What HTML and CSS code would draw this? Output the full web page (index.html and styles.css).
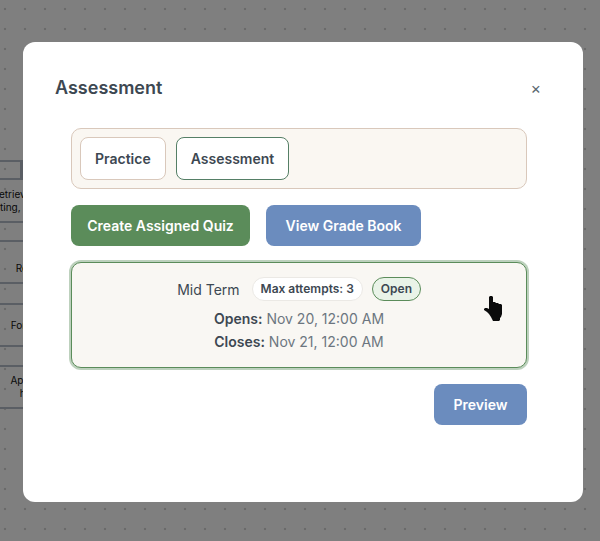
FILE: index.html
```html
<!DOCTYPE html>
<html lang="en">
<head>
<meta charset="utf-8">
<title>Assessment</title>
<link rel="stylesheet" href="styles.css">
</head>
<body>
<div class="canvas">
  <div class="node node-a"></div>
  <div class="node node-a2"></div>
  <div class="node node-b"><span>Retrieve data and</span><span>ting, and more</span></div>
  <div class="node node-c"><span>Fix</span><span>Recall</span></div>
  <div class="node node-d"><span>Formats</span></div>
  <div class="node node-e"><span>Apply to</span><span>help</span></div>
</div>
<div class="overlay">
  <section class="modal">
    <header class="modal-head">
      <h2 class="title">Assessment</h2>
      <span class="close">×</span>
    </header>
    <div class="body">
      <div class="tabs">
        <button class="tab">Practice</button>
        <button class="tab tab-active">Assessment</button>
      </div>
      <div class="actions">
        <button class="btn btn-green">Create Assigned Quiz</button>
        <button class="btn btn-blue btn-grades">View Grade Book</button>
      </div>
      <div class="card">
        <div class="card-row">
          <span class="quiz-name">Mid Term</span>
          <span class="pill">Max attempts: 3</span>
          <span class="pill pill-open">Open</span>
        </div>
        <div class="date date-first"><b>Opens:</b> Nov 20, 12:00 AM</div>
        <div class="date"><b>Closes:</b> Nov 21, 12:00 AM</div>
      </div>
      <div class="foot">
        <button class="btn btn-blue btn-preview">Preview</button>
      </div>
    </div>
    <svg class="cursor" width="18" height="25" viewBox="0 0 18 25"><path d="M5 1l1-1h2l1 1v5h2l1 1h2l1 1h2l1 1v9l-1 3-1 1v2l-1 1H9l-1-2-1-2-2-3-2-2-3-2v-1l1-1h2l2 1z" fill="#0b0b0b"/></svg>
  </section>
</div>
</body>
</html>
```
FILE: styles.css
```css
* { box-sizing: border-box; }
html, body { margin: 0; height: 100%; }
body {
  width: 600px;
  height: 541px;
  overflow: hidden;
  position: relative;
  font-family: Inter, "Liberation Sans", sans-serif;
  background-color: #fff;
}
.canvas {
  position: absolute;
  inset: 0;
  background-image: radial-gradient(circle, #d4d4d4 1.2px, transparent 1.6px);
  background-size: 20px 20px;
  background-position: -5px -1px;
}
.node {
  position: absolute;
  border: 2px solid #b4bcc8;
  font-size: 10px;
  line-height: 13px;
  color: #111;
  display: flex;
  flex-direction: column;
  align-items: center;
  justify-content: center;
  white-space: nowrap;
}
.node-a { left: -10px; top: 160px; width: 32px; height: 20px; }
.node-a2 { left: 21px; top: 160px; width: 20px; height: 20px; }
.node-b { left: -56px; top: 178px; width: 180px; height: 45px; }
.node-c { left: -60px; top: 240px; width: 180px; height: 44px; }
.node-d { left: -60px; top: 303px; width: 180px; height: 44px; }
.node-e { left: -60px; top: 365px; width: 180px; height: 44px; }
.overlay {
  position: absolute;
  inset: 0;
  background: rgba(0, 0, 0, 0.5);
  padding: 42px 17px 39px 23px;
}
.modal {
  position: relative;
  height: 460px;
  background: #fff;
  border-radius: 12px;
  padding: 32px;
}
.modal-head {
  display: flex;
  justify-content: space-between;
  align-items: center;
  height: 28px;
}
.title {
  margin: 0;
  font-size: 18px;
  font-weight: 600;
  color: #3d4852;
  line-height: 28px;
}
.close {
  font-size: 16px;
  color: #5b6770;
  margin-right: 10px;
  margin-bottom: 0;
}
.body {
  padding: 26px 24px 0 16px;
}
button { font-family: inherit; cursor: pointer; }
.tabs {
  display: flex;
  gap: 10px;
  padding: 8px;
  height: 61px;
  background: #faf7f2;
  border: 1px solid #d9c8bb;
  border-radius: 10px;
}
.tab {
  padding: 0 14px;
  height: 43px;
  background: #fff;
  border: 1px solid #d9c8bb;
  border-radius: 8px;
  font-size: 14px;
  font-weight: 600;
  color: #3d4852;
}
.tab-active { border-color: #557f66; }
.actions {
  display: flex;
  gap: 16px;
  margin-top: 16px;
}
.btn {
  height: 41px;
  border: 0;
  border-radius: 8px;
  padding: 0 16px;
  font-size: 14px;
  font-weight: 600;
  color: #fff;
}
.btn-green { background: #5b8c5a; width: 179px; }
.btn-blue { background: #6b8cbe; }
.btn-grades { width: 155px; padding: 0; }
.card {
  margin-top: 16px;
  height: 106px;
  background: #f9f7f3;
  border: 1px solid #5b8c5a;
  border-radius: 10px;
  box-shadow: 0 0 0 2px rgba(91, 140, 90, 0.4);
  padding-top: 14px;
  text-align: center;
}
.card-row {
  display: flex;
  justify-content: center;
  align-items: center;
  gap: 8px;
  height: 24px;
}
.quiz-name { font-size: 14px; color: #3d4852; margin-right: 4px; }
.pill {
  font-size: 12px;
  font-weight: 600;
  color: #3d4852;
  background: #fff;
  border: 1px solid #ebe9e5;
  border-radius: 12px;
  height: 24px;
  line-height: 22px;
  padding: 0 8px;
}
.pill-open {
  background: #e9f3e8;
  border-color: #5b8c5a;
  width: 49px;
  margin-left: 1px;
}
.date {
  font-size: 14px;
  line-height: 23px;
  color: #6c7680;
}
.date-first { margin-top: 6px; }
.date b { font-weight: 600; color: #3d4852; }
.foot {
  display: flex;
  justify-content: flex-end;
  margin-top: 16px;
}
.btn-preview { width: 93px; padding: 0; }
.cursor {
  position: absolute;
  left: 461px;
  top: 254px;
}
```
